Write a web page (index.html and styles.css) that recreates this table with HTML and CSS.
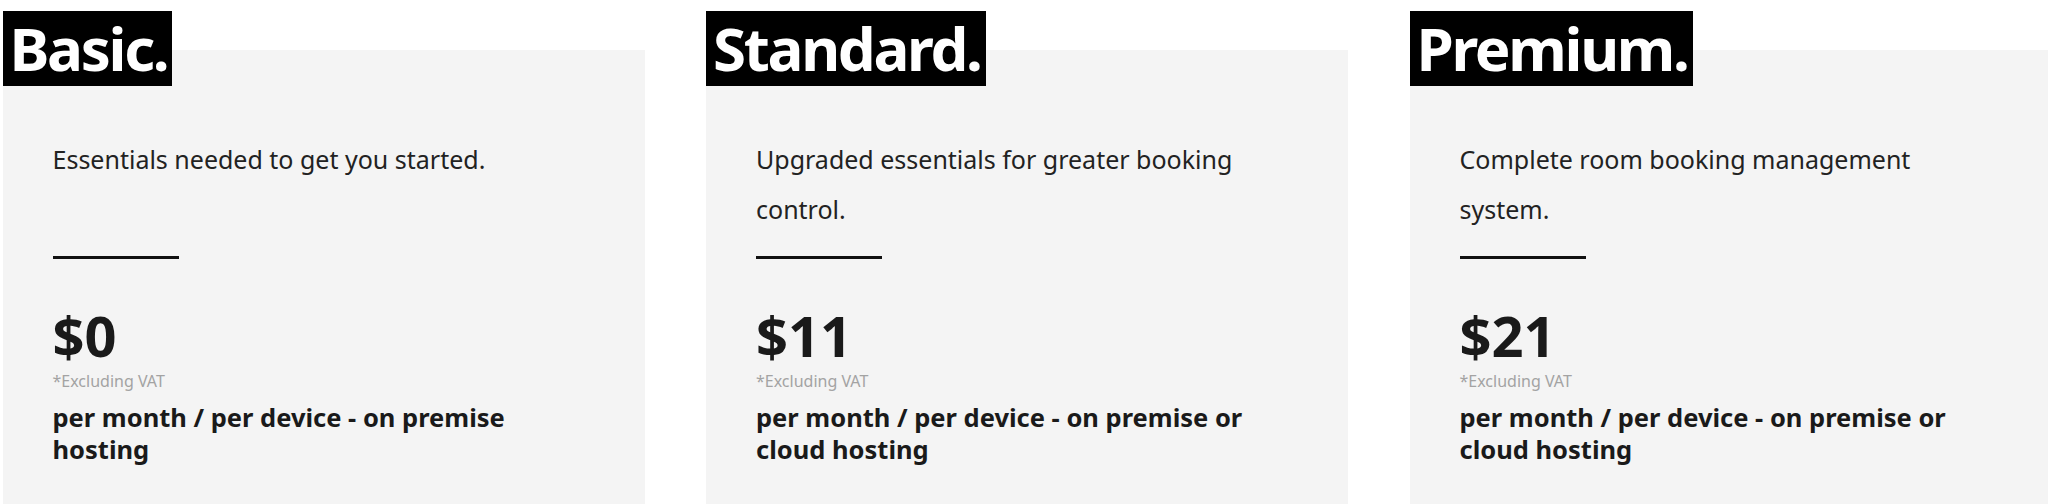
FILE: index.html
```html
<!DOCTYPE html>
<html lang="en">
<head>
<meta charset="utf-8">
<title>Pricing</title>
<link rel="stylesheet" href="styles.css">
</head>
<body>
<div class="plans">
  <section class="plan">
    <h2 class="plan-title">Basic.</h2>
    <div class="plan-card">
      <p class="plan-desc">Essentials needed to get you started.</p>
      <hr class="plan-rule">
      <div class="plan-price">$0</div>
      <div class="plan-vat">*Excluding VAT</div>
      <div class="plan-terms">per month / per device - on premise hosting</div>
    </div>
  </section>
  <section class="plan">
    <h2 class="plan-title">Standard.</h2>
    <div class="plan-card">
      <p class="plan-desc">Upgraded essentials for greater booking control.</p>
      <hr class="plan-rule">
      <div class="plan-price">$11</div>
      <div class="plan-vat">*Excluding VAT</div>
      <div class="plan-terms">per month / per device - on premise or cloud hosting</div>
    </div>
  </section>
  <section class="plan">
    <h2 class="plan-title">Premium.</h2>
    <div class="plan-card">
      <p class="plan-desc">Complete room booking management system.</p>
      <hr class="plan-rule">
      <div class="plan-price">$21</div>
      <div class="plan-vat">*Excluding VAT</div>
      <div class="plan-terms">per month / per device - on premise or cloud hosting</div>
    </div>
  </section>
</div>
</body>
</html>
```

FILE: styles.css
```css
html, body {
  margin: 0;
  padding: 0;
  background: #ffffff;
  overflow: hidden;
}

body {
  width: 2048px;
  height: 504px;
  font-family: "Noto Sans", "Open Sans", sans-serif;
  color: #222222;
}

.plans {
  display: grid;
  grid-template-columns: repeat(3, 642px);
  column-gap: 61.5px;
  padding: 11px 0 0 2.5px;
  height: 100%;
  box-sizing: border-box;
}

.plan {
  display: flex;
  flex-direction: column;
  align-items: flex-start;
  min-width: 0;
}

.plan-title {
  position: relative;
  z-index: 1;
  margin: 0;
  padding: 0 5px 0 7px;
  background: #000000;
  color: #ffffff;
  font-size: 60px;
  font-weight: 700;
  line-height: 75px;
  letter-spacing: -2.3px;
}

.plan-card {
  align-self: stretch;
  flex: 1;
  margin-top: -36px;
  background: #f4f4f4;
  padding: 84px 80px 40px 50px;
}

.plan-desc {
  margin: 0;
  min-height: 100px;
  font-size: 25px;
  line-height: 50px;
  color: #222222;
}

.plan-rule {
  margin: 22px 0 0 0;
  width: 126px;
  height: 3px;
  border: 0;
  background: #111111;
}

.plan-price {
  margin-top: 44px;
  font-size: 56px;
  font-weight: 700;
  line-height: 64px;
  color: #1a1a1a;
}

.plan-vat {
  margin-top: 4px;
  font-size: 16px;
  line-height: 20px;
  color: #a3a3a3;
}

.plan-terms {
  margin-top: 10px;
  font-size: 25.5px;
  font-weight: 700;
  line-height: 32px;
  color: #1a1a1a;
}
```
